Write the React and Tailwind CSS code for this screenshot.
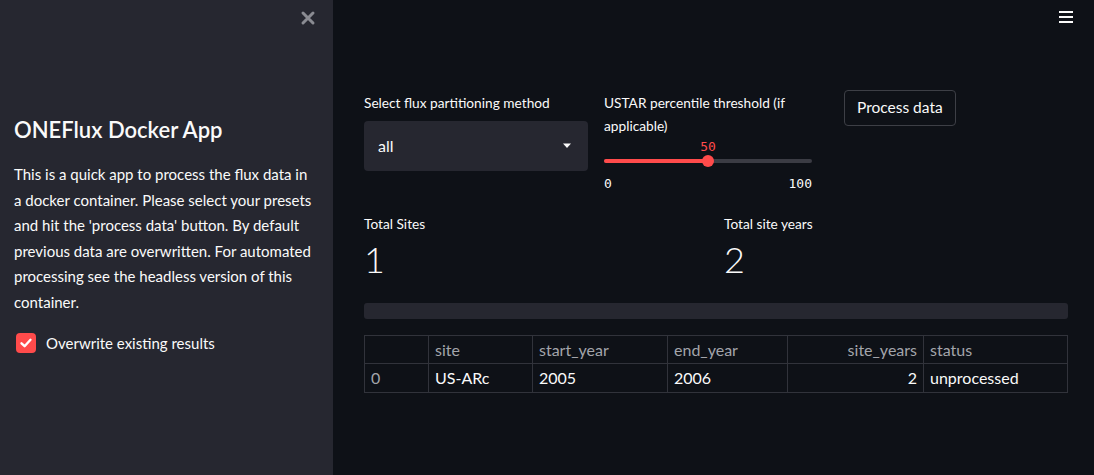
import { useState } from "react";

const rows = [{ idx: 0, site: "US-ARc", start: 2005, end: 2006, years: 2, status: "unprocessed" }];

function Sidebar({ overwrite, setOverwrite }) {
  return (
    <aside className="relative w-[333px] shrink-0 bg-[#262730] pl-[14px] pr-[16px] text-[#fafafa]">
      <button className="absolute right-[17px] top-[10px] text-[#8a8b92]">
        <svg width="16" height="16" viewBox="0 0 16 16">
          <path d="M3 3 L13 13 M13 3 L3 13" stroke="currentColor" strokeWidth="3" strokeLinecap="round" />
        </svg>
      </button>
      <h2 className="mt-[114px] text-[22px] font-semibold leading-[32px]">ONEFlux Docker App</h2>
      <p className="mt-[16px] text-[15px] leading-[25.6px]">
        This is a quick app to process the flux data in a docker container. Please select your presets
        and hit the 'process data' button. By default previous data are overwritten. For automated
        processing see the headless version of this container.
      </p>
      <label className="mt-[16px] flex cursor-pointer items-center gap-[10px] pl-[2px]">
        <span
          onClick={() => setOverwrite(!overwrite)}
          className={`flex h-[20px] w-[20px] items-center justify-center rounded-[4px] ${
            overwrite ? "bg-[#ff4b4b]" : "border border-[#555]"
          }`}
        >
          {overwrite && (
            <svg width="14" height="14" viewBox="0 0 14 14">
              <path d="M2.5 7.3 L5.6 10.2 L11.5 3.8" fill="none" stroke="white" strokeWidth="2.4" strokeLinecap="round" strokeLinejoin="round" />
            </svg>
          )}
        </span>
        <span className="text-[15px]">Overwrite existing results</span>
      </label>
    </aside>
  );
}

function Controls() {
  return (
    <div className="grid grid-cols-3 gap-4">
      <div>
        <p className="text-[13.7px] leading-[22px]">Select flux partitioning method</p>
        <div className="mt-[7px] flex h-[50px] items-center justify-between rounded-[4px] bg-[#262730] px-[14px]">
          <span className="text-[16px]">all</span>
          <svg width="10" height="6" viewBox="0 0 10 6" className="mr-[2px]">
            <path d="M1 0.5 L9 0.5 L5 5 Z" fill="#fafafa" />
          </svg>
        </div>
      </div>
      <div className="pr-[16px]">
        <p className="text-[13.7px] leading-[22.5px]">USTAR percentile threshold (if applicable)</p>
        <div className="relative mt-[2px] h-[26px]">
          <span className="absolute left-[104px] top-0 -translate-x-1/2 font-['DejaVu_Sans_Mono',monospace] text-[13px] leading-[16px] text-[#ff4b4b]">
            50
          </span>
          <div className="absolute left-0 right-0 top-[20px] h-[4px] rounded-full bg-[#3b3c44]">
            <div className="h-full w-1/2 rounded-full bg-[#ff4b4b]" />
          </div>
          <div className="absolute left-[98px] top-[16px] h-[12px] w-[12px] rounded-full bg-[#ff4b4b]" />
        </div>
        <div className="mt-[11px] flex justify-between font-['DejaVu_Sans_Mono',monospace] text-[13px] leading-[16px] text-[#fafafa]">
          <span>0</span>
          <span>100</span>
        </div>
      </div>
      <div className="-mt-[2px]">
        <button className="h-[36px] rounded-[4px] border border-[#3d3f46] bg-[#0e1117] px-[12px] text-[15.5px]">
          Process data
        </button>
      </div>
    </div>
  );
}

function Metric({ label, value }) {
  return (
    <div>
      <p className="text-[13.7px] leading-[20px]">{label}</p>
      <p className="mt-[5px] text-[36px] font-light leading-[40px]">{value}</p>
    </div>
  );
}

function DataTable() {
  const th = "border border-[#31333b] px-[6px] text-left font-normal text-[#a3a5ab]";
  const td = "border border-[#31333b] px-[6px]";
  return (
    <table className="w-full border-collapse text-[16px] leading-[24px]">
      <thead>
        <tr className="h-[28px]">
          <th className={`${th} w-[64px]`}></th>
          <th className={`${th} w-[104px]`}>site</th>
          <th className={`${th} w-[135px]`}>start_year</th>
          <th className={`${th} w-[120px]`}>end_year</th>
          <th className={`${th} w-[136px] !text-right`}>site_years</th>
          <th className={th}>status</th>
        </tr>
      </thead>
      <tbody>
        {rows.map((r) => (
          <tr key={r.idx} className="h-[29px]">
            <td className={`${td} text-[#a3a5ab]`}>{r.idx}</td>
            <td className={td}>{r.site}</td>
            <td className={td}>{r.start}</td>
            <td className={td}>{r.end}</td>
            <td className={`${td} text-right`}>{r.years}</td>
            <td className={td}>{r.status}</td>
          </tr>
        ))}
      </tbody>
    </table>
  );
}

export default function App() {
  const [overwrite, setOverwrite] = useState(true);
  return (
    <div className="flex h-[475px] w-[1094px] overflow-hidden bg-[#0e1117] font-['Lato',sans-serif] text-[#fafafa]">
      <Sidebar overwrite={overwrite} setOverwrite={setOverwrite} />
      <main className="relative flex-1 px-[31px] pr-[26px]">
        <button className="absolute right-[21px] top-[11px]">
          <svg width="14" height="12" viewBox="0 0 14 12">
            <path d="M0 1 H14 M0 6 H14 M0 11 H14" stroke="#fafafa" strokeWidth="2" />
          </svg>
        </button>
        <div className="mt-[92px]">
          <Controls />
        </div>
        <div className="mt-[22px] grid grid-cols-2 gap-4">
          <Metric label="Total Sites" value="1" />
          <Metric label="Total site years" value="2" />
        </div>
        <div className="mt-[24px] h-[16px] rounded-[3px] bg-[#262730]" />
        <div className="mt-[16px]">
          <DataTable />
        </div>
      </main>
    </div>
  );
}
